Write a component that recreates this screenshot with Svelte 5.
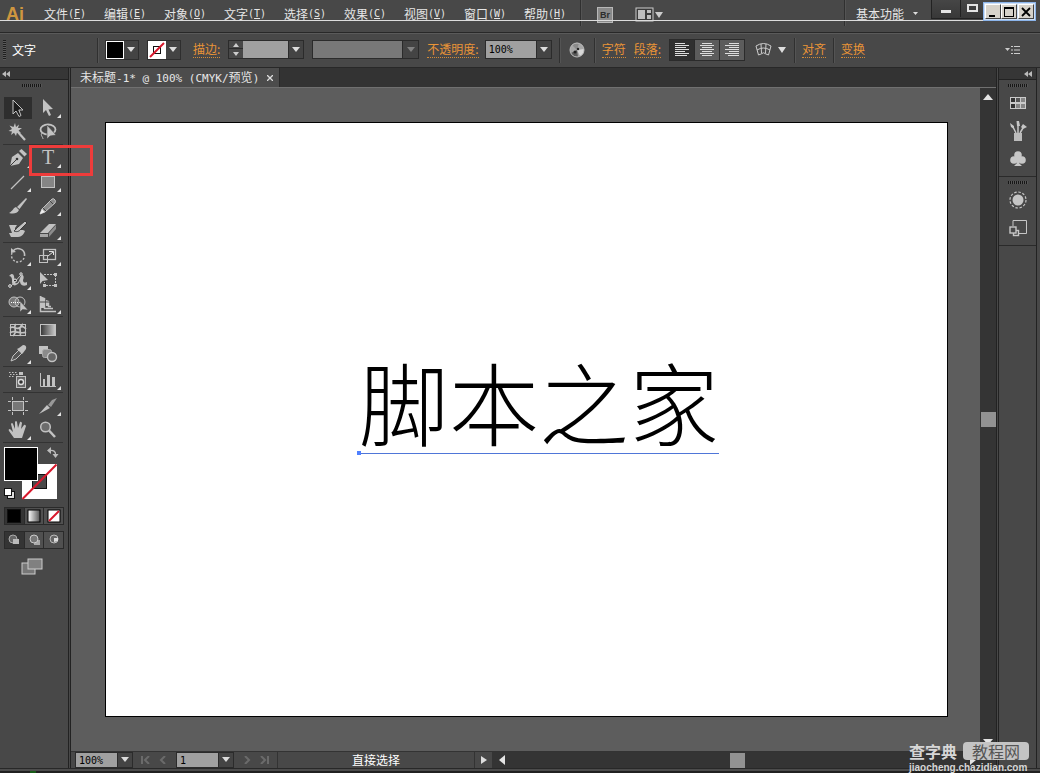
<script>
  const menus = [
    { label: '文件', key: 'F' },
    { label: '编辑', key: 'E' },
    { label: '对象', key: 'O' },
    { label: '文字', key: 'T' },
    { label: '选择', key: 'S' },
    { label: '效果', key: 'C' },
    { label: '视图', key: 'V' },
    { label: '窗口', key: 'W' },
    { label: '帮助', key: 'H' }
  ];

  // icons live in a 30x24 cell, drawn with the cell's text colour
  const toolGroups = [
    [
      {
        name: '选择工具',
        active: true,
        art: '<path d="M10 4V18L13 15L16 20.500L18 19.500L15.800 14H20Z" fill="#1c1c1c" stroke="currentColor"/>'
      },
      {
        name: '直接选择工具',
        more: true,
        art: '<path d="M10 3V17L13 14L16 20L18 19L15.500 13.500L20 13Z" fill="currentColor"/>'
      },
      {
        name: '魔棒工具',
        art: '<path d="M12 3L13 7L16 4.500L15 8L19 8L15.500 10.500L18 13L14 12.500L13 16L11 12.800L8 15L9 11.500L5.500 11L9 9L6.500 5.500L10.500 7Z" fill="currentColor"/><path d="M14 11L22 20" stroke="currentColor" stroke-width="2.200"/>'
      },
      {
        name: '套索工具',
        art: '<ellipse cx="15" cy="9.500" rx="7.500" ry="5" fill="none" stroke="currentColor" stroke-width="1.800"/><path d="M9 13C7 15 10 17 10 19" fill="none" stroke="currentColor"/><path d="M14 5V19L17 16L23 15Z" fill="currentColor" stroke="#484848" stroke-width=".6"/>'
      }
    ],
    [
      {
        name: '钢笔工具',
        more: true,
        art: '<path d="M7 20L9 11L15 7L20 12L16 18Z" fill="currentColor"/><path d="M16 5L18.500 3L24 8L21.500 10.500Z" fill="currentColor"/><path d="M7 20L13.500 13.500" stroke="#3c3c3c"/><circle cx="14" cy="13" r="1.300" fill="#333"/>'
      },
      {
        name: '文字工具',
        more: true,
        art: '<text x="15" y="18" text-anchor="middle" font-family="Liberation Serif, serif" font-size="20" fill="currentColor">T</text>'
      },
      {
        name: '直线段工具',
        more: true,
        art: '<path d="M8 19L21 6" stroke="currentColor" stroke-width="1.300"/>'
      },
      {
        name: '矩形工具',
        more: true,
        art: '<rect x="8.500" y="6.500" width="13" height="11" fill="#858585" stroke="currentColor"/>'
      },
      {
        name: '画笔工具',
        art: '<path d="M14 13L23 4L24 5L16.500 15Z" fill="currentColor"/><path d="M13 13L16 16C14 20 10 20 6 19C10 17 10 14 13 13Z" fill="currentColor"/>'
      },
      {
        name: '铅笔工具',
        more: true,
        art: '<path d="M7 20L9 15L19 5Q21 4 22 6Q23 7 22 9L12 18Z" fill="#8b8b8b" stroke="currentColor"/><path d="M17 7L20 10M10 14L13 17" stroke="#444"/><path d="M7 20L9 15L12 18Z" fill="#eee"/>'
      },
      {
        name: '斑点画笔工具',
        art: '<path d="M6 7H14L12 10V12H20L22 13C20 17 19 19 13 19H8L6 15H9Z" fill="currentColor"/><path d="M15 9L22 3L24 5L18 11C16 14 13 14 11 13C13 12 13 10 15 9Z" fill="currentColor" stroke="#3a3a3a" stroke-width="1"/>'
      },
      {
        name: '橡皮擦工具',
        more: true,
        art: '<path d="M7 15L16 6H23L15 15Z" fill="currentColor"/><path d="M7 16H15V19H7Z" fill="#a5a5a5"/><path d="M16 15L23 7V11L16 19Z" fill="#8c8c8c"/>'
      }
    ],
    [
      {
        name: '旋转工具',
        more: true,
        art: '<path d="M10 7A6.500 6.500 0 0 1 21.500 12" fill="none" stroke="currentColor" stroke-width="1.600"/><path d="M21 14A6.500 6.500 0 1 1 9 9" fill="none" stroke="currentColor" stroke-width="1.400" stroke-dasharray="2 1.600"/><path d="M8 9V4L13 8Z" fill="currentColor"/>'
      },
      {
        name: '比例缩放工具',
        more: true,
        art: '<rect x="6.500" y="11.500" width="8" height="7" fill="none" stroke="currentColor"/><rect x="10.500" y="5.500" width="12" height="10" fill="none" stroke="currentColor" stroke-width="1.300"/><path d="M15 12L20 8M16 7.500H20.500V11" fill="none" stroke="#e0e0e0"/>'
      },
      {
        name: '宽度工具',
        more: true,
        art: '<path d="M6 8C10 3 12 8 11 12C12 18 16 15 17 10C19 4 22 8 20 12C20 15 22 15 24 14V17C19 19 17 16 17 13C14 19 8 19 9 12C9 10 8 8 6 8Z" fill="currentColor"/><path d="M7 19L18 7" stroke="currentColor"/><circle cx="12" cy="12.500" r="1.500" fill="#333" stroke="#eee"/><circle cx="7" cy="18" r="1.300" fill="#333" stroke="#eee"/><circle cx="18" cy="6" r="1.200" fill="#333" stroke="#eee"/>'
      },
      {
        name: '自由变换工具',
        art: '<path d="M7 4V16L9.500 13L15 12Z" fill="currentColor"/><path d="M11 6.500H22.500V17.500H11.500V14" fill="none" stroke="currentColor" stroke-dasharray="2 1"/><path d="M21 5H24V8H21ZM21 16H24V19H21ZM10 16H13V19H10Z" fill="currentColor"/>'
      },
      {
        name: '形状生成器工具',
        more: true,
        art: '<circle cx="11" cy="10" r="5" fill="#777" stroke="currentColor"/><circle cx="17" cy="10" r="5" fill="none" stroke="currentColor"/><path d="M8 10.500H18" stroke="#fff" stroke-dasharray="1 1"/><path d="M17 9V20L19.500 17.500L25 18Z" fill="currentColor" stroke="#444" stroke-width=".5"/>'
      },
      {
        name: '透视网格工具',
        more: true,
        art: '<path d="M7.500 4V19.500H23M11.500 6V16.500H20M15.500 9V14.500H18" fill="none" stroke="currentColor" stroke-width="1.500"/><path d="M7 4L12 6V16H7ZM13 8L16 9V14H13Z" fill="currentColor"/><path d="M7 10H17" stroke="#484848"/>'
      }
    ],
    [
      {
        name: '网格工具',
        art: '<rect x="7.500" y="6.500" width="15" height="11" fill="none" stroke="currentColor"/><path d="M7 10C11 7 13 12 16 10S20 8 23 11M7 15C11 11 17 17 23 14M13 6C9 10 16 12 10 18M20 6C14 10 19 13 17 18" fill="none" stroke="currentColor" stroke-width="1.700"/>'
      },
      {
        name: '渐变工具',
        art: '<defs><linearGradient id="toolGrad"><stop offset="0" stop-color="#333"/><stop offset="1" stop-color="#ccc"/></linearGradient></defs><rect x="7.500" y="6.500" width="15" height="11" fill="url(#toolGrad)" stroke="currentColor"/>'
      },
      {
        name: '吸管工具',
        more: true,
        art: '<path d="M8 19L10 14L16 8L19 11L13 17Z" fill="#555" stroke="currentColor"/><path d="M14 7L16 6L20 3Q24 3 23 7L20 11L19 12Z" fill="currentColor"/>'
      },
      {
        name: '混合工具',
        art: '<rect x="6" y="4" width="9" height="8" fill="currentColor"/><rect x="9.500" y="7.500" width="9" height="8" rx="2" fill="#8b8b8b" stroke="#ababab"/><circle cx="19" cy="15" r="4.500" fill="#666" stroke="currentColor" stroke-width="1.400"/>'
      }
    ],
    [
      {
        name: '符号喷枪工具',
        more: true,
        art: '<path d="M6 4.500H14M7 6.500H15M6 8.500H11" stroke="currentColor" stroke-dasharray="1.500 1.500"/><path d="M16 4H20V7H16Z" fill="currentColor"/><rect x="13.500" y="8.500" width="9" height="11" fill="#686868" stroke="currentColor"/><circle cx="18" cy="14" r="2.500" fill="#333" stroke="#ddd" stroke-width="1.400"/>'
      },
      {
        name: '柱形图工具',
        more: true,
        art: '<path d="M7.500 5V18.500H23" fill="none" stroke="currentColor"/><path d="M10 11H12V18H10ZM14 7H17V18H14ZM19 9H22V18H19Z" fill="currentColor"/>'
      }
    ],
    [
      {
        name: '画板工具',
        art: '<rect x="9.500" y="7.500" width="11" height="9" fill="#777" stroke="currentColor"/><path d="M9.500 3V6M20.500 3V6M9.500 18V21M20.500 18V21M5 7.500H8M22 7.500H25M5 16.500H8M22 16.500H25" stroke="currentColor"/>'
      },
      {
        name: '切片工具',
        more: true,
        art: '<path d="M6 20L14 11L17 14Z" fill="currentColor"/><path d="M15 11L19 6L24 4L18 13Z" fill="#999"/>'
      },
      {
        name: '抓手工具',
        more: true,
        art: '<path d="M11 20L6 13Q5 11 7 11L10 14L8 6Q9 4 10 6L12 11L12 4Q13 2 14 4L15 10L17 4Q18 3 19 5L18 11L21 7Q22 6 23 8L20 17L19 20Z" fill="currentColor"/>'
      },
      {
        name: '缩放工具',
        art: '<circle cx="12.500" cy="9" r="4.800" fill="#6c6c6c" stroke="currentColor" stroke-width="1.500"/><path d="M16 12.500L22 19" stroke="currentColor" stroke-width="2.500"/>'
      }
    ]
  ];

  const dockGroups = [
    [
      {
        name: '色板',
        art: '<path d="M2 4H18V16H2Z" fill="#c9c9c9"/><path d="M3 5H7V9H3ZM3 11H7V15H3Z" fill="#333"/><path d="M8 5H12V9H8Z" fill="#555"/><path d="M13 5H17V9H13ZM8 11H12V15H8ZM13 11H17V15H13Z" fill="#858585"/>'
      },
      {
        name: '画笔',
        art: '<path d="M6 12H14V20H6Z" fill="#bcbcbc"/><path d="M8 12L5 6M10 12V5M12 12L15 7" stroke="currentColor" stroke-width="1.500"/><path d="M2 2L6 5L6 8L3 6ZM8.500 0H11L12 5H9ZM13 6L15 3L19 6L15 8Z" fill="currentColor"/>'
      },
      {
        name: '符号',
        art: '<circle cx="10" cy="6" r="3.800" fill="currentColor"/><circle cx="6" cy="11" r="3.800" fill="currentColor"/><circle cx="14" cy="11" r="3.800" fill="currentColor"/><path d="M9 8H11L11 14L14 17H6L9 14Z" fill="currentColor"/>'
      }
    ],
    [
      {
        name: '外观',
        art: '<circle cx="10" cy="10" r="5.500" fill="currentColor"/><circle cx="10" cy="10" r="8" fill="none" stroke="currentColor" stroke-width="1.200" stroke-dasharray="2.500 1.700"/>'
      },
      {
        name: '图形样式',
        art: '<path d="M5 8V2.500H18.500V15.500H11" fill="none" stroke="currentColor"/><rect x="5.500" y="12.500" width="5" height="5" fill="none" stroke="currentColor" stroke-width="1.400"/><rect x="2" y="9" width="6" height="6" fill="#484848" stroke="currentColor" stroke-width="1.400"/>'
      }
    ]
  ];
</script>

{#snippet arrow()}
  <svg width="8" height="6" viewBox="0 0 8 6"><path d="M0 0H8L4 5Z" fill="#dcdcdc" /></svg>
{/snippet}

<div class="app">
  <header class="menubar">
    <span class="logo">Ai</span>
    <nav>
      {#each menus as menu}
        <button class="plain menu">{menu.label}<span class="lat">(<u>{menu.key}</u>)</span></button>
      {/each}
    </nav>
    <i class="sep"></i>
    <button class="plain bridge" aria-label="Bridge"><span>Br</span></button>
    <button class="plain arrange" aria-label="排列文档">
      <svg width="28" height="16" viewBox="0 0 28 16">
        <rect x="1" y="1" width="17" height="13" fill="#3a3a3a" stroke="#ccc" />
        <path d="M3 3H10V12H3ZM12 3H16V6H12ZM12 8H16V12H12Z" fill="#bdbdbd" />
        <path d="M20 5H28L24 11Z" fill="#ccc" />
      </svg>
    </button>
    <div class="right">
      <i class="sep"></i>
      <button class="plain workspace">基本功能
        <svg width="5" height="4" viewBox="0 0 5 4"><path d="M0 0H5L2.500 3Z" fill="#ddd" /></svg>
      </button>
      <div class="inner-win">
        <button aria-label="最小化程序"><svg width="12" height="10"><path d="M1 6H11V9H1Z" fill="#e4e4e4" /></svg></button>
        <button aria-label="还原程序"><svg width="12" height="10"><path d="M2 1H11V7H2Z" fill="none" stroke="#e4e4e4" stroke-width="2" /></svg></button>
      </div>
      <div class="outer-win">
        <button aria-label="最小化"><svg width="12" height="12"><path d="M2 9H8V11H2Z" /></svg></button>
        <button aria-label="最大化"><svg width="12" height="12"><path d="M1 1H11V11H1ZM2 3V10H10V3Z" fill-rule="evenodd" /></svg></button>
        <button class="close" aria-label="关闭"><svg width="12" height="12"><path d="M2 2L10 10M10 2L2 10" stroke="#000" stroke-width="1.800" /></svg></button>
      </div>
    </div>
  </header>

  <div class="control">
    <i class="vgrip"></i>
    <span class="kind">文字</span>
    <i class="sep"></i>
    <button class="swatch" aria-label="填色"><span class="chip black"></span><span class="drop">{@render arrow()}</span></button>
    <button class="swatch" aria-label="描边颜色">
      <svg width="18" height="18" viewBox="0 0 18 18">
        <rect width="18" height="18" fill="#fff" />
        <rect x="5.500" y="5.500" width="7" height="7" fill="#fff" stroke="#111" />
        <path d="M2 16L16 2" stroke="#d8182c" stroke-width="2" />
      </svg>
      <span class="drop">{@render arrow()}</span>
    </button>
    <button class="link stroke">描边:</button>
    <div class="combo weight">
      <span class="spin">
        <button aria-label="增加"><svg width="6" height="4"><path d="M0 4H6L3 0Z" fill="#ccc" /></svg></button>
        <button aria-label="减少"><svg width="6" height="4"><path d="M0 0H6L3 4Z" fill="#ccc" /></svg></button>
      </span>
      <input aria-label="描边粗细" />
      <button class="drop" aria-label="描边粗细列表">{@render arrow()}</button>
    </div>
    <div class="combo profile">
      <select aria-label="画笔定义" disabled><option></option></select>
      <span class="drop">{@render arrow()}</span>
    </div>
    <button class="link">不透明度:</button>
    <div class="combo opacity">
      <input class="lat" aria-label="不透明度" value="100%" />
      <button class="drop" aria-label="不透明度列表">{@render arrow()}</button>
    </div>
    <i class="sep"></i>
    <button class="plain recolor" aria-label="重新着色图稿">
      <svg width="16" height="16" viewBox="0 0 16 16">
        <circle cx="8" cy="8" r="7" fill="#a6a6a6" />
        <path d="M8 8L3 3A7 7 0 0 1 10 1Z" fill="#8a8a8a" />
        <path d="M8 8L15 7A7 7 0 0 1 11 14Z" fill="#d8d8d8" />
        <path d="M8 8L9 15A7 7 0 0 1 2 11Z" fill="#5c5c5c" />
        <circle cx="6" cy="10" r="1.500" fill="#222" />
        <circle cx="9" cy="7" r="1.200" fill="#222" />
        <circle cx="8" cy="8" r="7" fill="none" stroke="#bbb" />
      </svg>
    </button>
    <i class="sep"></i>
    <button class="link">字符</button>
    <button class="link">段落:</button>
    <div class="aligns">
      <button class="on" aria-label="左对齐"><svg width="16" height="14"><path d="M1 .5H11M1 2.500H15M1 4.500H12M1 6.500H15M1 8.500H11M1 10.500H15M1 12.500H13" stroke="#ddd" /></svg></button>
      <button aria-label="居中对齐"><svg width="16" height="14"><path d="M3 .5H13M1 2.500H15M3 4.500H13M1 6.500H15M3 8.500H13M1 10.500H15M3 12.500H13" stroke="#ddd" /></svg></button>
      <button aria-label="右对齐"><svg width="16" height="14"><path d="M5 .5H15M1 2.500H15M5 4.500H15M1 6.500H15M5 8.500H15M1 10.500H15M4 12.500H15" stroke="#ddd" /></svg></button>
    </div>
    <button class="plain envelope" aria-label="制作封套">
      <svg width="32" height="16" viewBox="0 0 32 16">
        <path d="M1 4Q8.500 -1 16 4L13.500 13L11 12Q8.500 9.500 6 12L3.500 13ZM2 8Q8.500 4 15 8M6 2L6.500 11M11 2L10.500 11" fill="none" stroke="#ccc" />
        <path d="M23 5H31L27 11Z" fill="#ddd" />
      </svg>
    </button>
    <i class="sep"></i>
    <button class="link">对齐</button>
    <i class="sep"></i>
    <button class="link">变换</button>
    <button class="plain panel-menu" aria-label="面板菜单">
      <svg width="15" height="10" viewBox="0 0 15 10">
        <path d="M0 3H5L2.500 6Z" fill="#ccc" />
        <path d="M6 1.500H8M9 1.500H15M6 5H8M9 5H15M6 8.500H8M9 8.500H15" stroke="#ccc" />
      </svg>
    </button>
  </div>

  <div class="body">
    <aside class="tools">
      <div class="collapse"><svg width="8" height="6"><path d="M4 0V6L0 3ZM8 0V6L4 3Z" fill="#bbb" /></svg></div>
      <i class="hgrip"></i>
      {#each toolGroups as group}
        <div class="group">
          {#each group as tool}
            <button class="tool" class:active={tool.active} aria-label={tool.name}>
              <svg width="30" height="24" viewBox="0 0 30 24">
                {@html tool.art}
                {#if tool.more}<path d="M28 18V22H24Z" fill="#e2e2e2" />{/if}
              </svg>
            </button>
          {/each}
        </div>
      {/each}
      <div class="paint">
        <svg width="60" height="64" viewBox="0 0 60 64">
          <path d="M18 21H53V56H18ZM28 31V46H43V31Z" fill="#fff" fill-rule="evenodd" />
          <rect x="28.500" y="31.500" width="14" height="14" fill="#484848" stroke="#111" />
          <path d="M18.500 56L52.500 21.500" stroke="#d8182c" stroke-width="2" />
          <rect x=".5" y="4.500" width="33" height="33" fill="#000" stroke="#fff" />
          <path d="M46 7.500Q52 7 51.500 12" fill="none" stroke="#bbb" stroke-width="1.300" />
          <path d="M47 4V11L43 7.500ZM48.500 11H54.500L51.500 15Z" fill="#bbb" />
          <rect x="3.500" y="48.500" width="7" height="7" fill="#ddd" stroke="#111" />
          <rect x=".5" y="45.500" width="7" height="7" fill="#fff" stroke="#111" />
        </svg>
      </div>
      <div class="triple colors">
        <button aria-label="颜色"><svg width="14" height="14"><rect x=".5" y=".5" width="13" height="13" fill="#000" stroke="#111" /></svg></button>
        <button aria-label="渐变">
          <svg width="14" height="14">
            <defs><linearGradient id="fillGrad"><stop offset="0" stop-color="#fff" /><stop offset="1" stop-color="#555" /></linearGradient></defs>
            <rect x="1" y="1" width="12" height="12" fill="url(#fillGrad)" stroke="#000" />
          </svg>
        </button>
        <button aria-label="无"><svg width="14" height="14"><rect x="1" y="1" width="12" height="12" fill="#fff" stroke="#000" /><path d="M2 12L12 2" stroke="#d8182c" stroke-width="2" /></svg></button>
      </div>
      <div class="triple modes">
        <button class="on" aria-label="正常绘图"><svg width="14" height="14"><circle cx="6" cy="6" r="4" fill="#666" stroke="#aaa" /><rect x="6" y="6" width="6" height="5" fill="#bbb" /></svg></button>
        <button aria-label="背面绘图"><svg width="14" height="14"><rect x="7" y="7" width="6" height="5" fill="#aaa" /><circle cx="7" cy="6" r="4" fill="#777" stroke="#ccc" /></svg></button>
        <button aria-label="内部绘图"><svg width="14" height="14"><circle cx="7" cy="6" r="4" fill="#666" stroke="#bbb" /><path d="M7 5H11V8L7 9Z" fill="#ddd" /></svg></button>
      </div>
      <button class="plain screen" aria-label="更改屏幕模式">
        <svg width="22" height="17" viewBox="0 0 22 17">
          <rect x="1" y="5" width="13" height="11" fill="#777" stroke="#ccc" />
          <rect x="7" y="1" width="14" height="10" fill="#808080" stroke="#ccc" />
        </svg>
      </button>
      <i class="highlight"></i>
    </aside>

    <main>
      <div class="tabs">
        <div class="tab">
          <span>未标题<span class="lat">-1* @ 100% (CMYK/</span>预览<span class="lat">)</span></span>
          <button class="plain" aria-label="关闭文档"><svg width="6" height="6"><path d="M0 0L6 6M6 0L0 6" stroke="#ddd" stroke-width="1.300" /></svg></button>
        </div>
      </div>
      <div class="view">
        <div class="canvas">
          <div class="artboard">
            <div class="art-text">脚本之家</div>
          </div>
        </div>
        <div class="vscroll">
          <svg width="10" height="6"><path d="M0 6H10L5 0Z" fill="#e4e4e4" /></svg>
          <i></i>
          <svg width="10" height="6"><path d="M0 0H10L5 6Z" fill="#e4e4e4" /></svg>
        </div>
      </div>
      <footer>
        <div class="combo zoom">
          <input class="lat" aria-label="缩放" value="100%" />
          <button class="drop" aria-label="缩放列表">{@render arrow()}</button>
        </div>
        <div class="nav">
          <button class="plain" aria-label="首项"><svg width="9" height="8"><path d="M1 0V8M8 0L4 4L8 8" fill="none" stroke="#6b6b6b" stroke-width="2" /></svg></button>
          <button class="plain" aria-label="上一项"><svg width="9" height="8"><path d="M6 0L2 4L6 8" fill="none" stroke="#6b6b6b" stroke-width="2" /></svg></button>
        </div>
        <div class="combo zoom">
          <input class="lat" aria-label="画板" value="1" />
          <button class="drop" aria-label="画板列表">{@render arrow()}</button>
        </div>
        <div class="nav">
          <button class="plain" aria-label="下一项"><svg width="9" height="8"><path d="M3 0L7 4L3 8" fill="none" stroke="#6b6b6b" stroke-width="2" /></svg></button>
          <button class="plain" aria-label="末项"><svg width="9" height="8"><path d="M8 0V8M1 0L5 4L1 8" fill="none" stroke="#6b6b6b" stroke-width="2" /></svg></button>
        </div>
        <span class="status">直接选择</span>
        <button class="play" aria-label="状态菜单"><svg width="6" height="8"><path d="M0 0V8L6 4Z" fill="#ddd" /></svg></button>
        <div class="hscroll">
          <svg width="6" height="10"><path d="M6 0V10L0 5Z" fill="#e4e4e4" /></svg>
          <i></i>
          <svg width="6" height="10"><path d="M0 0V10L6 5Z" fill="#e4e4e4" /></svg>
        </div>
      </footer>
    </main>

    <aside class="dock">
      <div class="collapse"><svg width="8" height="6"><path d="M4 0V6L0 3ZM8 0V6L4 3Z" fill="#bbb" /></svg></div>
      {#each dockGroups as group}
        <div class="dock-group">
          <i class="hgrip"></i>
          {#each group as panel}
            <button class="plain" aria-label={panel.name}><svg width="20" height="20" viewBox="0 0 20 20">{@html panel.art}</svg></button>
          {/each}
        </div>
      {/each}
    </aside>
  </div>
  <div class="edge"><i></i></div>

  <div class="watermark">
    <div class="mark-top"><b>查字典</b><span>教程网</span></div>
    <div class="mark-url">jiaocheng.chazidian.com</div>
  </div>
</div>

<style>
  :global(body) {
    margin: 0;
    background: #484848;
  }

  .app {
    position: relative;
    display: flex;
    flex-direction: column;
    min-height: 100vh;
    overflow: hidden;
    color: #e6e6e6;
    font: 12px/16px 'Noto Sans CJK SC', sans-serif;
  }

  svg {
    display: block;
    flex: none;
  }

  i {
    display: block;
    flex: none;
  }

  button,
  input,
  select {
    box-sizing: border-box;
    margin: 0;
    padding: 0;
    border: 0;
    border-radius: 0;
    color: inherit;
    font: inherit;
  }

  button {
    display: flex;
    align-items: center;
    justify-content: center;
    flex: none;
    background: none;
    white-space: nowrap;
  }

  .lat {
    font-family: 'DejaVu Sans Mono', monospace;
    font-size: 10px;
    white-space: pre;
  }

  .sep {
    width: 1px;
    align-self: stretch;
    background: #303030;
    border-right: 1px solid #545454;
  }

  /* menu bar */
  .menubar {
    position: relative;
    display: flex;
    height: 33px;
    box-sizing: border-box;
    padding-left: 6px;
    border-bottom: 1px solid #282828;
    background: #484848;
  }

  .menubar::after {
    content: '';
    position: absolute;
    left: 0;
    right: 57px;
    top: 20px;
    height: 1px;
    background: #dcdcdc;
  }

  .logo {
    width: 38px;
    color: #cf963f;
    font: bold 18px/28px 'Liberation Sans', sans-serif;
  }

  nav {
    display: flex;
  }

  .menu {
    width: 60px;
    height: 28px;
    justify-content: flex-start;
  }

  nav .menu:last-child {
    width: 56px;
  }

  .menubar > .sep,
  .right > .sep {
    height: 26px;
    align-self: flex-start;
  }

  .bridge {
    height: 30px;
    margin: 0 22px 0 15px;
  }

  .bridge span {
    box-sizing: border-box;
    width: 16px;
    height: 16px;
    border: 1px solid #b8b8b8;
    background: #8a8a8a;
    color: #2c2c2c;
    font: bold 9px/14px 'Liberation Sans', sans-serif;
  }

  .arrange {
    height: 30px;
  }

  .right {
    display: flex;
    margin-left: auto;
    padding-right: 4px;
  }

  .workspace {
    height: 28px;
    gap: 9px;
    margin: 0 13px 0 10px;
  }

  .inner-win {
    display: flex;
    height: 18px;
    background: linear-gradient(#464646, #383838);
    border: solid #222;
    border-width: 0 0 1px 1px;
  }

  .inner-win button {
    width: 29px;
    height: 17px;
    border-right: 1px solid #222;
  }

  .inner-win button:last-child {
    width: 22px;
    border: 0;
  }

  .outer-win {
    display: flex;
    box-sizing: border-box;
    height: 19px;
    margin-top: 2px;
    padding: 1px;
    border: 1px solid #8bb4ea;
    background: #cfe0f5;
  }

  .outer-win button {
    width: 16px;
    height: 15px;
    border: 1px solid;
    border-color: #fff #444 #444 #fff;
    background: #d6d2ca;
  }

  .outer-win .close {
    margin-left: 1px;
  }

  /* control bar */
  .control {
    display: flex;
    align-items: center;
    gap: 8px;
    height: 35px;
    box-sizing: border-box;
    padding: 0 20px 2px 3px;
    border-top: 1px solid #5a5a5a;
    border-bottom: 1px solid #282828;
    background: #484848;
  }

  .control > .sep {
    margin: 4px -2px 2px -1px;
  }

  .vgrip {
    width: 3px;
    height: 20px;
    margin-right: -2px;
    background: repeating-linear-gradient(#1e1e1e 0 1px, #5a5a5a 1px 2px);
  }

  .kind {
    width: 78px;
    color: #fff;
  }

  .swatch {
    border: 1px solid #2e2e2e;
    height: 20px;
  }

  .swatch .drop {
    width: 14px;
  }

  .chip {
    box-sizing: border-box;
    width: 18px;
    height: 18px;
    border: 1px solid #fff;
  }

  .black {
    background: #000;
  }

  .drop {
    display: flex;
    align-items: center;
    justify-content: center;
    width: 15px;
    height: 100%;
    background: #444;
  }

  .link {
    height: 17px;
    border-bottom: 1px dotted #d48a35;
    color: #ea9437;
  }

  .stroke {
    margin-left: 4px;
  }

  .combo {
    display: flex;
    flex: none;
    box-sizing: border-box;
    height: 19px;
    border: 1px solid #2b2b2b;
  }

  .combo input,
  .combo select {
    flex: 1;
    min-width: 0;
    height: 100%;
    padding: 0 0 0 3px;
    background: #a0a0a0;
    color: #000;
    appearance: none;
    outline: 0;
  }

  .combo .drop {
    border-left: 1px solid #2b2b2b;
  }

  .weight {
    width: 76px;
  }

  .spin {
    display: flex;
    flex-direction: column;
    justify-content: space-between;
    width: 14px;
  }

  .spin button {
    height: 8px;
  }

  .spin button:first-child {
    border-bottom: 1px solid #2b2b2b;
  }

  .profile {
    width: 107px;
  }

  .profile select {
    background: #787878;
    opacity: 1;
  }

  .profile .drop svg {
    opacity: 0.4;
  }

  .opacity {
    width: 67px;
    margin-left: -2px;
  }

  .recolor {
    width: 20px;
  }

  .aligns {
    display: flex;
    border: 1px solid #2b2b2b;
  }

  .aligns button {
    width: 25px;
    height: 20px;
    background: #5c5c5c;
  }

  .aligns button + button {
    border-left: 1px solid #2b2b2b;
  }

  .aligns .on {
    width: 24px;
    background: #303030;
  }

  .envelope {
    margin-left: 2px;
  }

  .panel-menu {
    margin-left: auto;
  }

  /* tool panel */
  .body {
    display: flex;
    flex: 1;
  }

  .tools {
    position: relative;
    display: flex;
    flex-direction: column;
    flex: none;
    width: 68px;
    border-right: 3px double #222;
    background: #484848;
    color: #c2c2c2;
  }

  .collapse {
    display: flex;
    align-items: center;
    height: 11px;
    padding-left: 2px;
    border-bottom: 1px solid #222;
    background: #363636;
  }

  .hgrip {
    width: 20px;
    height: 3px;
    margin: 4px auto 9px 22px;
    background: repeating-linear-gradient(90deg, #161616 0 1px, #555 1px 2px);
  }

  .group {
    display: flex;
    flex-wrap: wrap;
    width: 60px;
    margin: 0 3px;
    padding-top: 1px;
    border-bottom: 1px solid #333;
  }

  .hgrip + .group {
    padding-top: 0;
  }

  .tool {
    width: 30px;
    height: 24px;
  }

  .active {
    background: #2e2e2e;
    background-clip: content-box;
    padding: 1px;
  }

  .paint {
    margin-left: 4px;
  }

  .triple {
    display: flex;
    width: 60px;
    margin: 0 0 6px 4px;
    border: 1px solid #2a2a2a;
    box-sizing: border-box;
  }

  .triple button {
    flex: 1;
    height: 16px;
    background: #505050;
  }

  .triple button + button {
    border-left: 1px solid #2a2a2a;
  }

  .triple .on,
  .colors button:first-child {
    background: #343434;
  }

  .screen {
    align-self: flex-start;
    margin: 3px 0 0 21px;
  }

  .highlight {
    position: absolute;
    z-index: 2;
    left: 29px;
    top: 77px;
    width: 58px;
    height: 25px;
    border: 3px solid #ee3c3b;
  }

  /* document */
  main {
    display: flex;
    flex-direction: column;
    flex: 1;
    min-width: 0;
  }

  .tabs {
    display: flex;
    height: 19px;
    background: #333;
    border-bottom: 1px solid #707070;
  }

  .tab {
    display: flex;
    align-items: center;
    gap: 8px;
    padding: 0 6px 0 9px;
    background: #4c4c4c;
    border-right: 1px solid #2a2a2a;
  }

  .tab .lat {
    font-size: 11px;
  }

  .view {
    display: flex;
    flex: 1;
  }

  .canvas {
    display: flex;
    flex: 1;
    padding: 34px 32px 34px 34px;
    background: #5d5d5d;
  }

  .artboard {
    position: relative;
    flex: 1;
    border: 1px solid #000;
    background: #fff;
  }

  .art-text {
    position: absolute;
    left: 253px;
    top: 37%;
    color: #000;
    font-size: 90px;
    font-weight: 300;
    line-height: 116px;
    white-space: nowrap;
  }

  .art-text::before {
    content: '';
    position: absolute;
    left: 0;
    right: 0;
    top: 111px;
    height: 1px;
    background: #4f76d8;
  }

  .art-text::after {
    content: '';
    position: absolute;
    left: -2px;
    top: 109px;
    width: 4px;
    height: 4px;
    background: #4f80ff;
  }

  .vscroll {
    display: flex;
    flex-direction: column;
    align-items: center;
    justify-content: space-between;
    width: 16px;
    padding: 6px 0;
    background: #343434;
  }

  .vscroll i,
  .hscroll i {
    width: 15px;
    height: 15px;
    background: #929292;
  }

  footer {
    display: flex;
    align-items: center;
    height: 16px;
    padding-left: 4px;
    border-top: 1px solid #333;
    background: #484848;
  }

  footer .combo {
    width: 58px;
    height: 16px;
  }

  .nav {
    display: flex;
    justify-content: space-between;
    width: 27px;
    padding: 0 8px;
  }

  .status {
    width: 196px;
    border-left: 1px solid #333;
    color: #fff;
    text-align: center;
  }

  .play {
    width: 18px;
    height: 16px;
    border-left: 1px solid #333;
  }

  .hscroll {
    display: flex;
    flex: 1;
    align-items: center;
    justify-content: space-between;
    height: 16px;
    padding: 0 20px 0 7px;
    background: #343434;
  }

  /* right dock */
  .dock {
    flex: none;
    width: 37px;
    border-left: 3px double #222;
    border-right: 1px solid #222;
    margin-right: 3px;
    background: #484848;
    color: #c6c6c6;
  }

  .dock .collapse {
    justify-content: flex-end;
    padding-right: 4px;
  }

  .dock-group {
    display: flex;
    flex-direction: column;
    align-items: center;
    gap: 8px;
    padding: 4px 0 7px;
    border-bottom: 1px solid #2a2a2a;
  }

  .dock-group .hgrip {
    margin: 0 0 -2px;
  }

  .edge {
    height: 2px;
    border-top: 1px solid #282828;
    border-bottom: 2px solid #202020;
    background: #4c4c4c;
  }

  .edge i {
    width: 6px;
    height: 2px;
    margin-left: 30px;
    border-bottom: 2px solid #175a17;
  }

  .watermark {
    position: absolute;
    right: 11px;
    bottom: 0;
    width: 120px;
    color: #d6d6d6;
  }

  .mark-top {
    display: flex;
    justify-content: space-between;
    margin-bottom: 2px;
    font-size: 16px;
    line-height: 18px;
  }

  .mark-top span {
    display: flex;
    justify-content: center;
    width: 66px;
    border-radius: 4px;
    background: #c4c4c4;
    color: #555;
  }

  .mark-url {
    font: bold 10px/11px 'Liberation Sans', sans-serif;
    white-space: nowrap;
  }
</style>
